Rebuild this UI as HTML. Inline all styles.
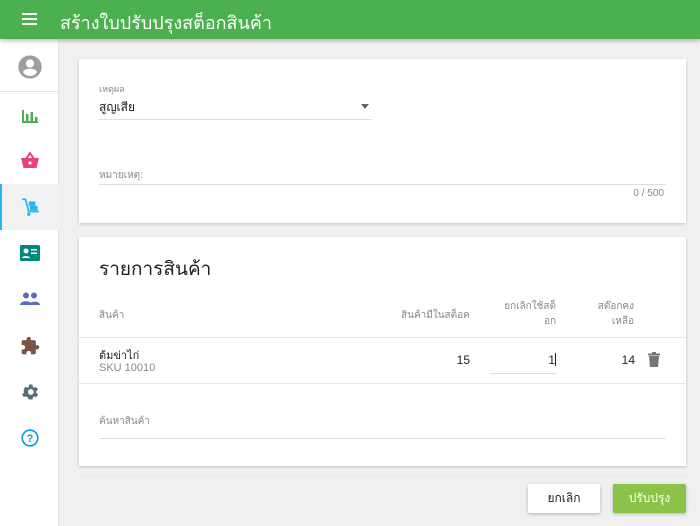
<!DOCTYPE html>
<html><head><meta charset="utf-8"><style>
*{box-sizing:border-box;margin:0;padding:0}
body{width:700px;height:526px;overflow:hidden;background:#f0f0f0;font-family:"Liberation Sans","Noto Sans CJK SC",sans-serif;position:relative;color:#212121}
.hdr{position:absolute;left:0;top:0;width:700px;height:39px;background:#4caf50;box-shadow:0 2px 4px rgba(0,0,0,.25);z-index:2}
.hdr .t{position:absolute;left:60px;top:8px;color:#fff;font-size:18px}
.side{position:absolute;left:0;top:39px;width:59px;height:487px;background:#fff;border-right:1px solid #e4e4e4}
.si{position:absolute;left:0;width:59px;height:46px;display:flex;align-items:center;justify-content:center}
.card{position:absolute;left:79px;width:607px;background:#fff;box-shadow:0 1px 3px rgba(0,0,0,.2)}
.lbl{position:absolute;font-size:10px;color:#888}
.line{position:absolute;height:1px;background:#ddd}
.btn{position:absolute;top:484px;height:29px;font-size:12px;display:flex;align-items:center;justify-content:center;box-shadow:0 1px 3px rgba(0,0,0,.25);border-radius:2px}
</style></head><body>
<div class="hdr">
<svg style="position:absolute;left:22px;top:13px" width="15" height="12"><rect y="0" width="15" height="2" fill="#fff"/><rect y="5" width="15" height="2" fill="#fff"/><rect y="10" width="15" height="2" fill="#fff"/></svg>
<div class="t">สร้างใบปรับปรุงสต็อกสินค้า</div></div>
<div class="side">
<div class="si" style="top:3px;height:50px;border-bottom:1px solid #e4e4e4"><svg width="28" height="28" viewBox="0 0 24 24"><path fill="#9e9e9e" d="M12 2a10 10 0 100 20 10 10 0 000-20zm0 3.5a3.5 3.5 0 110 7 3.5 3.5 0 010-7zm0 14.2a7.2 7.2 0 01-6-3.2c0-2 4-3.1 6-3.1s6 1.1 6 3.1a7.2 7.2 0 01-6 3.2z"/></svg></div>
<div class="si" style="top:54px"><svg width="18" height="16"><rect x="1" y="2" width="2" height="13" fill="#4caf50"/><rect x="5" y="6" width="2.5" height="9" fill="#4caf50"/><rect x="9.5" y="4" width="2.5" height="11" fill="#4caf50"/><rect x="14" y="9" width="2.5" height="6" fill="#4caf50"/><rect x="1" y="13" width="16" height="2" fill="#4caf50"/></svg></div>
<div class="si" style="top:99px"><svg width="20" height="18" viewBox="0 0 20 18"><path d="M6 7L10 1l4 6" stroke="#ec407a" stroke-width="2" fill="none"/><path d="M1 6h18l-2.5 10h-13z" fill="#ec407a"/><circle cx="10" cy="11" r="1.6" fill="#fff"/></svg></div>
<div class="si" style="top:145px;background:#f2f2f2;border-left:2px solid #29b6f6"><svg width="20" height="20" viewBox="0 0 18 18"><path d="M1 2h3l3 11h9" stroke="#29b6f6" stroke-width="1.6" fill="none"/><rect x="7" y="4" width="6" height="4" fill="#29b6f6"/><rect x="8" y="8" width="7" height="4" fill="#29b6f6"/><circle cx="7" cy="15.5" r="1.5" fill="#29b6f6"/></svg></div>
<div class="si" style="top:191px"><svg width="20" height="16"><rect width="20" height="16" rx="1.5" fill="#00897b"/><circle cx="6" cy="6" r="2.5" fill="#fff"/><path d="M2 13c0-2.5 8-2.5 8 0z" fill="#fff"/><rect x="11" y="4" width="6" height="1.5" fill="#fff"/><rect x="11" y="7.5" width="6" height="1.5" fill="#fff"/></svg></div>
<div class="si" style="top:237px"><svg width="20" height="14"><circle cx="6" cy="3.5" r="3" fill="#5c6bc0"/><circle cx="14" cy="3.5" r="3" fill="#5c6bc0"/><path d="M0 13c0-5 12-5 12 0zM9 13c0-4 11-5 11 0z" fill="#5c6bc0"/></svg></div>
<div class="si" style="top:284px"><svg width="20" height="20" viewBox="0 0 24 24"><path fill="#795548" d="M20.5 11H19V7a2 2 0 00-2-2h-4V3.5a2.5 2.5 0 00-5 0V5H4a2 2 0 00-2 2v3.8h1.5a2.7 2.7 0 010 5.4H2V20a2 2 0 002 2h3.8v-1.5a2.7 2.7 0 015.4 0V22H17a2 2 0 002-2v-4h1.5a2.5 2.5 0 000-5z"/></svg></div>
<div class="si" style="top:330px"><svg width="20" height="20" viewBox="0 0 24 24"><path fill="#546e7a" d="M19.4 13a7.5 7.5 0 000-2l2.1-1.7-2-3.4-2.5 1a7.3 7.3 0 00-1.7-1L15 3h-4l-.4 2.7a7.3 7.3 0 00-1.7 1l-2.5-1-2 3.4L4.6 11a7.5 7.5 0 000 2l-2.1 1.7 2 3.4 2.5-1a7.3 7.3 0 001.7 1L11 21h4l.4-2.7a7.3 7.3 0 001.7-1l2.5 1 2-3.4zM13 15.5a3.5 3.5 0 110-7 3.5 3.5 0 010 7z"/></svg></div>
<div class="si" style="top:376px"><svg width="18" height="18" viewBox="0 0 18 18"><circle cx="9" cy="9" r="7.8" stroke="#039be5" stroke-width="1.6" fill="none"/><text x="9" y="13" font-size="11" font-weight="bold" text-anchor="middle" fill="#039be5" font-family="Liberation Sans">?</text></svg></div>
</div>

<div class="card" style="top:59px;height:164px">
<div class="lbl" style="left:20px;top:23px;font-size:9px">เหตุผล</div>
<div style="position:absolute;left:20px;top:39px;font-size:12px">สูญเสีย</div>
<div style="position:absolute;left:282px;top:45px;border:4px solid transparent;border-top:5px solid #666"></div>
<div class="line" style="left:20px;top:60px;width:273px"></div>
<div class="lbl" style="left:20px;top:109px">หมายเหตุ:</div>
<div class="line" style="left:20px;top:125px;width:567px"></div>
<div class="lbl" style="right:22px;top:129px;font-size:10px">0 / 500</div>
</div>

<div class="card" style="top:237px;height:229px">
<div style="position:absolute;left:20px;top:17px;font-size:19px;color:#222">รายการสินค้า</div>
<div class="lbl" style="left:20px;top:71px">สินค้า</div>
<div class="lbl" style="left:322px;top:71px">สินค้ามีในสต็อค</div>
<div class="lbl" style="left:412px;top:62px;width:65px;text-align:right;line-height:15px">ยกเลิกใช้สต็<br>อก</div>
<div class="lbl" style="left:500px;top:62px;width:55px;text-align:right;line-height:15px">สต๊อกคง<br>เหลือ</div>
<div class="line" style="left:0;top:100px;width:607px;background:#e6e6e6"></div>
<div style="position:absolute;left:20px;top:109px;font-size:11px">ต้มข่าไก่</div>
<div style="position:absolute;left:20px;top:125px;font-size:11px;color:#888">SKU 10010</div>
<div style="position:absolute;left:370px;top:116px;font-size:12px;width:21px;text-align:right">15</div>
<div style="position:absolute;left:410px;top:116px;font-size:12px;width:67px;text-align:right">1<span style="display:inline-block;width:1px;height:13px;background:#222;vertical-align:-2px"></span></div>
<div class="line" style="left:411px;top:136px;width:66px"></div>
<div style="position:absolute;left:530px;top:116px;font-size:12px;width:26px;text-align:right">14</div>
<svg style="position:absolute;left:569px;top:115px" width="12" height="15"><rect x="0" y="1.5" width="12" height="2" fill="#757575"/><rect x="4" y="0" width="4" height="2" fill="#757575"/><path d="M1 4h10l-1 11H2z" fill="#757575"/></svg>
<div class="line" style="left:0;top:146px;width:607px;background:#e6e6e6"></div>
<div class="lbl" style="left:20px;top:177px;font-size:10px">ค้นหาสินค้า</div>
<div class="line" style="left:20px;top:201px;width:567px"></div>
</div>
<div class="line" style="left:79px;top:475px;width:607px;background:#e8e8e8"></div>

<div class="btn" style="left:528px;width:72px;background:#fff">ยกเลิก</div>
<div class="btn" style="left:613px;width:73px;background:#8bc34a;color:#fff">ปรับปรุง</div>
</body></html>
